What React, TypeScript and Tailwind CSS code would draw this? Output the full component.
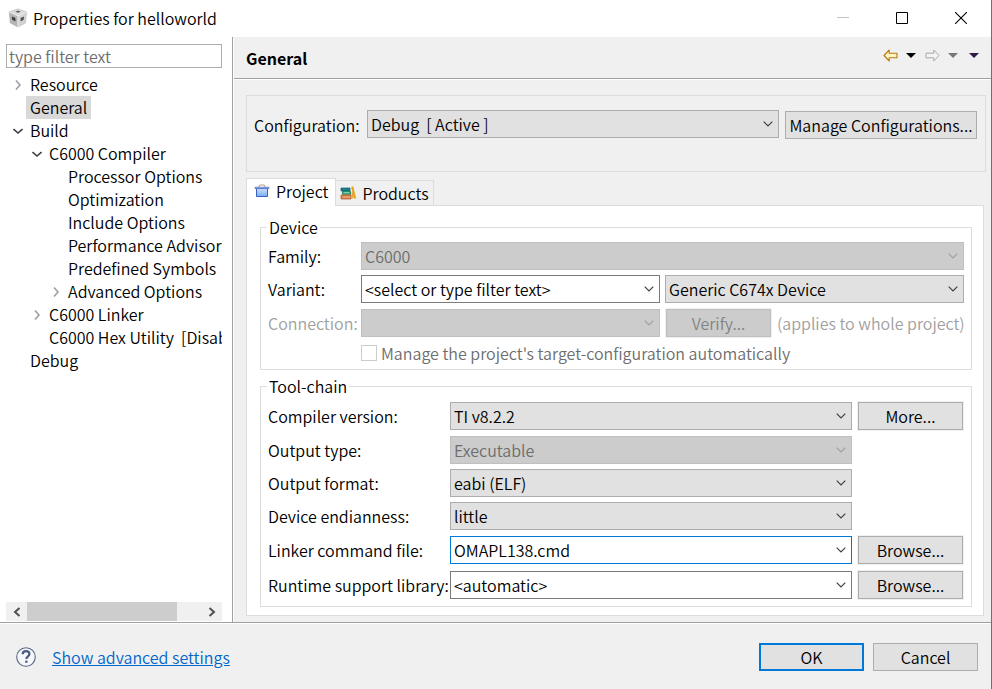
import type { ReactNode } from "react";
import clsx from "clsx";

type TreeItem = {
  label: string;
  level: number;
  state?: "open" | "closed";
  selected?: boolean;
};

const tree: TreeItem[] = [
  { label: "Resource", level: 0, state: "closed" },
  { label: "General", level: 0, selected: true },
  { label: "Build", level: 0, state: "open" },
  { label: "C6000 Compiler", level: 1, state: "open" },
  { label: "Processor Options", level: 2 },
  { label: "Optimization", level: 2 },
  { label: "Include Options", level: 2 },
  { label: "Performance Advisor", level: 2 },
  { label: "Predefined Symbols", level: 2 },
  { label: "Advanced Options", level: 2, state: "closed" },
  { label: "C6000 Linker", level: 1, state: "closed" },
  { label: "C6000 Hex Utility  [Disabled]", level: 1 },
  { label: "Debug", level: 0 },
];

const indent = ["pl-1", "pl-[23px]", "pl-[42px]"];

function Chevron({ className }: { className?: string }) {
  return (
    <svg
      viewBox="0 0 10 6"
      className={clsx("h-[6px] w-[10px] fill-none stroke-current", className)}
      aria-hidden="true"
    >
      <path d="M0.7 0.7 5 5 9.3 0.7" strokeWidth="1.2" />
    </svg>
  );
}

function Select({
  id,
  value,
  disabled,
  label,
  className,
}: {
  id: string;
  value: string;
  disabled?: boolean;
  label?: string;
  className?: string;
}) {
  return (
    <div className={clsx("relative h-7 min-w-0", className)}>
      <select
        id={id}
        aria-label={label}
        disabled={disabled}
        defaultValue={value}
        className="h-7 w-full appearance-none border border-[#adadad] bg-[#e1e1e1] pr-6 pl-[3px] leading-6 text-black outline-none disabled:border-[#bfbfbf] disabled:bg-[#cccccc] disabled:text-[#6d6d6d] disabled:opacity-100"
      >
        <option>{value}</option>
      </select>
      <Chevron
        className={clsx(
          "pointer-events-none absolute top-[11px] right-[6px]",
          disabled ? "text-[#a0a0a0]" : "text-[#404040]",
        )}
      />
    </div>
  );
}

function ComboBox({
  id,
  value,
  focused,
}: {
  id: string;
  value: string;
  focused?: boolean;
}) {
  return (
    <div
      className={clsx(
        "flex h-7 min-w-0 items-center border bg-white pr-[5px] pl-[3px]",
        focused ? "border-[#0078d7]" : "border-[#7a7a7a]",
      )}
    >
      <input
        id={id}
        type="text"
        defaultValue={value}
        className="h-6 w-full min-w-0 leading-6 outline-none"
      />
      <button type="button" aria-label="Show choices" className="shrink-0">
        <Chevron className="text-[#404040]" />
      </button>
    </div>
  );
}

function Button({
  children,
  primary,
  disabled,
  className,
}: {
  children: ReactNode;
  primary?: boolean;
  disabled?: boolean;
  className?: string;
}) {
  return (
    <button
      type="button"
      disabled={disabled}
      className={clsx(
        "m-px h-7 leading-5 whitespace-nowrap outline outline-[#f0f0f0]",
        primary ? "border-2 border-[#0078d7]" : "border",
        !primary && (disabled ? "border-[#bfbfbf]" : "border-[#adadad]"),
        disabled ? "bg-[#cccccc] text-[#838383]" : "bg-[#e1e1e1]",
        className,
      )}
    >
      {children}
    </button>
  );
}

function Group({ title, children }: { title: string; children: ReactNode }) {
  return (
    <fieldset className="min-w-0 border border-[#dcdcdc] pt-[5px] pr-[7px] pb-[6px] pl-[7px]">
      <legend className="-ml-px px-[2px] leading-5">{title}</legend>
      {children}
    </fieldset>
  );
}

function CubeIcon() {
  return (
    <svg viewBox="0 0 20 20" className="size-5" aria-hidden="true">
      <path d="M10 0.8 18.5 4 10 7.8 1.2 4Z" fill="#dcdcdc" stroke="#b4b4b4" strokeWidth="0.6" />
      <path d="M1.2 4 10 7.8V19L2.4 15Z" fill="#b4b4b4" stroke="#a4a4a4" strokeWidth="0.6" />
      <path d="M18.5 4 10 7.8V19L17.3 15Z" fill="#d4d4d4" stroke="#b0b0b0" strokeWidth="0.6" />
      <path d="M7.4 3.6 10 2.7 12.8 3.6 10 4.8Z" fill="#555" />
      <path d="M3.8 8.4 7.4 10V13.4L4.2 11.8Z" fill="#3c3c3c" />
      <path d="M12.6 10 16 8.4 15.7 11.8 12.6 13.4Z" fill="#505050" />
      <path d="M1.2 4 10 7.8 18.5 4M10 7.8V19" fill="none" stroke="#f6f6f6" />
    </svg>
  );
}

function ProjectIcon() {
  return (
    <svg viewBox="0 0 16 14" className="h-[14px] w-4" aria-hidden="true">
      <defs>
        <linearGradient id="case" x1="0" y1="0" x2="0" y2="1">
          <stop offset="0" stopColor="#cfe3fb" />
          <stop offset="1" stopColor="#74aef0" />
        </linearGradient>
      </defs>
      <path d="M5 3V1.8l1-0.8h4l1 0.8V3" fill="none" stroke="#c39a84" />
      <path d="M2.5 4.5h11v8h-11z" fill="url(#case)" stroke="#3a5fc0" />
      <path d="M1 3.2h14v1.4H1z" fill="#9cc0f0" stroke="#4c6fc4" strokeWidth="0.7" />
    </svg>
  );
}

function ProductsIcon() {
  return (
    <svg viewBox="0 0 16 14" className="h-[14px] w-4" aria-hidden="true">
      <path d="M1 2h9v3H1z" fill="#1d7f96" stroke="#155a70" strokeWidth="0.7" />
      <path d="M2.5 5.3h8v3h-8z" fill="#25a06a" stroke="#11704a" strokeWidth="0.7" />
      <path d="M3.5 6.8h6" stroke="#c9efd9" strokeWidth="0.8" />
      <path d="M1 9h10v4H1z" fill="#d9814a" stroke="#a8532a" strokeWidth="0.7" />
      <path d="M2.5 11h8" stroke="#f5c7a4" strokeWidth="0.8" />
      <path d="M11.6 1.2 13 0.8 15.6 12 14.2 12.4Z" fill="#f6b51c" stroke="#d08c00" strokeWidth="0.6" />
      <path d="M12.2 6.5v6" stroke="#e09a10" strokeWidth="1.2" />
    </svg>
  );
}

function ArrowIcon({ forward }: { forward?: boolean }) {
  return (
    <svg viewBox="0 0 15 13" className="h-[13px] w-[15px]" aria-hidden="true">
      {forward ? (
        <path
          d="M14 6.5 8.8 1V4.2H1v4.6H8.8V12Z"
          fill="#f4f4f4"
          stroke="#a9a9a9"
          strokeLinejoin="round"
        />
      ) : (
        <path
          d="M1 6.5 6.2 1V4.2H14v4.6H6.2V12Z"
          fill="#fff3c4"
          stroke="#b97a10"
          strokeWidth="1.1"
          strokeLinejoin="round"
        />
      )}
    </svg>
  );
}

function Triangle({ className }: { className: string }) {
  return (
    <svg
      viewBox="0 0 10 5"
      className={clsx("h-[5px] w-[10px] fill-current", className)}
      aria-hidden="true"
    >
      <path d="M0 0h10L5 5Z" />
    </svg>
  );
}

function TitleBar() {
  return (
    <header className="flex h-[37px] shrink-0 items-center bg-white pb-px pl-2">
      <CubeIcon />
      <h1 className="flex-1 pl-[5px]">Properties for helloworld</h1>
      <div className="flex gap-[47px] pr-6">
        <button type="button" aria-label="Minimize" disabled>
          <svg viewBox="0 0 12 12" className="size-3">
            <path d="M0 5.5h12" stroke="#c4c4c4" />
          </svg>
        </button>
        <button type="button" aria-label="Maximize">
          <svg viewBox="0 0 12 12" className="size-3">
            <path d="M0.5 0.5h11v11h-11z" fill="none" stroke="#000" />
          </svg>
        </button>
        <button type="button" aria-label="Close">
          <svg viewBox="0 0 12 12" className="size-3">
            <path d="m0 0 12 12M12 0 0 12" stroke="#000" strokeWidth="1.1" />
          </svg>
        </button>
      </div>
    </header>
  );
}

function Sidebar() {
  return (
    <aside className="flex w-[233px] shrink-0 flex-col border-r border-[#a0a0a0] bg-white pt-[7px] pr-[10px] pb-px pl-[6px]">
      <input
        type="text"
        aria-label="Filter"
        placeholder="type filter text"
        className="h-6 w-full border border-[#abadb3] px-[2px] leading-5 outline-none placeholder:text-[#6d6d6d]"
      />
      <ul className="mt-[5px] flex-1 overflow-hidden" role="tree">
        {tree.map((item) => (
          <li
            key={item.label}
            role="treeitem"
            aria-selected={!!item.selected}
            className={clsx("flex h-[23px] items-center whitespace-pre", indent[item.level])}
          >
            <span className="flex w-4 shrink-0 justify-center">
              {item.state && (
                <svg
                  viewBox="0 0 10 10"
                  className={clsx(
                    "size-[10px] fill-none",
                    item.state === "open" ? "stroke-[#404040]" : "stroke-[#a0a0a0]",
                  )}
                  aria-hidden="true"
                >
                  <path
                    d={item.state === "open" ? "M0.5 3 5 7 9.5 3" : "M3 0.5 7 5 3 9.5"}
                    strokeWidth="1.6"
                  />
                </svg>
              )}
            </span>
            <span className={clsx("px-1 leading-[23px]", item.selected && "bg-[#d9d9d9]")}>
              {item.label}
            </span>
          </li>
        ))}
      </ul>
      <div className="flex h-[19px] items-center bg-[#f0f0f0]">
        <button type="button" aria-label="Scroll left" className="flex w-[21px] justify-center">
          <svg viewBox="0 0 8 10" className="h-[10px] w-2 fill-none stroke-[#505050]">
            <path d="M6.5 1 2 5l4.5 4" strokeWidth="2" />
          </svg>
        </button>
        <div className="h-full flex-1">
          <div className="h-full w-[86%] bg-[#cdcdcd]" />
        </div>
        <button type="button" aria-label="Scroll right" className="flex w-[21px] justify-center">
          <svg viewBox="0 0 8 10" className="h-[10px] w-2 fill-none stroke-[#505050]">
            <path d="M1.5 1 6 5 1.5 9" strokeWidth="2" />
          </svg>
        </button>
      </div>
    </aside>
  );
}

function DeviceGroup() {
  return (
    <Group title="Device">
      <div className="grid grid-cols-[88px_minmax(0,1fr)_minmax(0,1fr)] items-center gap-[5px]">
        <label htmlFor="family">Family:</label>
        <Select id="family" value="C6000" disabled className="col-span-2" />

        <label htmlFor="variant">Variant:</label>
        <ComboBox id="variant" value="<select or type filter text>" />
        <Select id="variant-device" label="Device" value="Generic C674x Device" />

        <label htmlFor="connection" className="text-[#a0a0a0]">
          Connection:
        </label>
        <Select id="connection" value="" disabled />
        <div className="flex items-center">
          <Button disabled className="w-[105px] shrink-0">
            Verify...
          </Button>
          <span className="pl-[5px] whitespace-nowrap text-[#a0a0a0]">
            (applies to whole project)
          </span>
        </div>

        <label className="col-span-2 col-start-2 flex items-center gap-1 text-[#6d6d6d]">
          <input
            type="checkbox"
            disabled
            className="size-4 appearance-none border border-[#cccccc] bg-white"
          />
          Manage the project's target-configuration automatically
        </label>
      </div>
    </Group>
  );
}

function ToolchainGroup() {
  return (
    <Group title="Tool-chain">
      <div className="grid grid-cols-[182px_minmax(0,1fr)_112px] items-center gap-y-[5px] whitespace-nowrap">
        <label htmlFor="compiler">Compiler version:</label>
        <Select id="compiler" value="TI v8.2.2" />
        <Button className="ml-[6px]">More...</Button>

        <label htmlFor="output-type">Output type:</label>
        <Select id="output-type" value="Executable" disabled />

        <label htmlFor="output-format" className="col-start-1">
          Output format:
        </label>
        <Select id="output-format" value="eabi (ELF)" />

        <label htmlFor="endianness" className="col-start-1">
          Device endianness:
        </label>
        <Select id="endianness" value="little" />

        <label htmlFor="linker-file" className="col-start-1">
          Linker command file:
        </label>
        <ComboBox id="linker-file" value="OMAPL138.cmd" focused />
        <Button className="ml-[6px]">Browse...</Button>

        <label htmlFor="runtime">Runtime support library:</label>
        <ComboBox id="runtime" value="<automatic>" />
        <Button className="ml-[6px]">Browse...</Button>
      </div>
    </Group>
  );
}

function GeneralPage() {
  return (
    <main className="ml-px flex min-w-0 flex-1 flex-col bg-[#f0f0f0]">
      <div className="flex h-[42px] items-center border-b border-[#a0a0a0] px-3">
        <h2 className="flex-1 font-bold">General</h2>
        <div className="flex items-center pb-1">
          <button type="button" aria-label="Back">
            <ArrowIcon />
          </button>
          <button type="button" aria-label="Back history" className="ml-2">
            <Triangle className="text-black" />
          </button>
          <button type="button" aria-label="Forward" className="ml-[9px]">
            <ArrowIcon forward />
          </button>
          <button type="button" aria-label="Forward history" className="ml-2">
            <Triangle className="text-[#78757c]" />
          </button>
          <button type="button" aria-label="Menu" className="ml-[11px]">
            <Triangle className="text-[#2d1a45]" />
          </button>
        </div>
      </div>

      <div className="flex flex-1 flex-col border-t border-white pt-[15px] pr-[5px] pb-[6px] pl-3">
        <div className="flex h-[77px] items-start border border-[#dcdcdc] pt-[14px] pr-[7px] pl-[7px]">
          <label htmlFor="configuration" className="w-[113px] leading-[30px]">
            Configuration:
          </label>
          <Select
            id="configuration"
            value={"Debug\u00a0 [ Active ]"}
            className="flex-1"
          />
          <Button className="ml-[6px] w-[192px]">Manage Configurations...</Button>
        </div>

        <div role="tablist" className="mt-[6px] flex h-7 items-end">
          <button
            type="button"
            role="tab"
            aria-selected="true"
            className="relative z-10 flex h-7 items-center gap-[6px] border border-b-0 border-[#dcdcdc] bg-white px-[7px] pb-1"
          >
            <ProjectIcon />
            Project
          </button>
          <button
            type="button"
            role="tab"
            aria-selected="false"
            className="flex h-[26px] items-center gap-[6px] border border-l-0 border-[#dcdcdc] px-1"
          >
            <ProductsIcon />
            Products
          </button>
        </div>
        <div className="-mt-px mr-[2px] flex flex-1 flex-col gap-[6px] border border-[#dcdcdc] bg-white pt-[11px] pr-[11px] pb-2 pl-[13px]">
          <DeviceGroup />
          <ToolchainGroup />
        </div>
      </div>
    </main>
  );
}

function Footer() {
  return (
    <footer className="border-t border-[#a0a0a0]">
      <div className="flex h-[66px] items-center border-t border-white bg-[#f0f0f0] pr-3 pl-4">
        <button type="button" aria-label="Help">
          <svg viewBox="0 0 20 20" className="size-5">
            <circle cx="10" cy="10" r="9.3" fill="#f6f7fa" stroke="#5a6784" strokeWidth="1.1" />
            <path
              d="M6.7 7.3C6.7 5.2 8 4.2 10 4.2s3.4 1 3.4 2.8c0 2.4-3 2.5-3 5"
              fill="none"
              stroke="#4c5b80"
              strokeWidth="2.2"
            />
            <path d="M9.2 13.6h2.3v2.2H9.2z" fill="#4c5b80" />
          </svg>
        </button>
        <a href="#advanced" className="ml-4 text-[#0066cc] underline">
          Show advanced settings
        </a>
        <div className="ml-auto flex gap-[7px]">
          <Button primary className="w-[105px]">
            OK
          </Button>
          <Button className="w-[105px]">Cancel</Button>
        </div>
      </div>
    </footer>
  );
}

export default function App() {
  return (
    <div className="flex min-h-screen flex-col border-r border-[#707070] bg-white font-['Noto_Sans_CJK_SC',sans-serif] text-[16px] leading-5 font-[350] text-black">
      <TitleBar />
      <div className="flex flex-1">
        <Sidebar />
        <GeneralPage />
      </div>
      <Footer />
    </div>
  );
}
